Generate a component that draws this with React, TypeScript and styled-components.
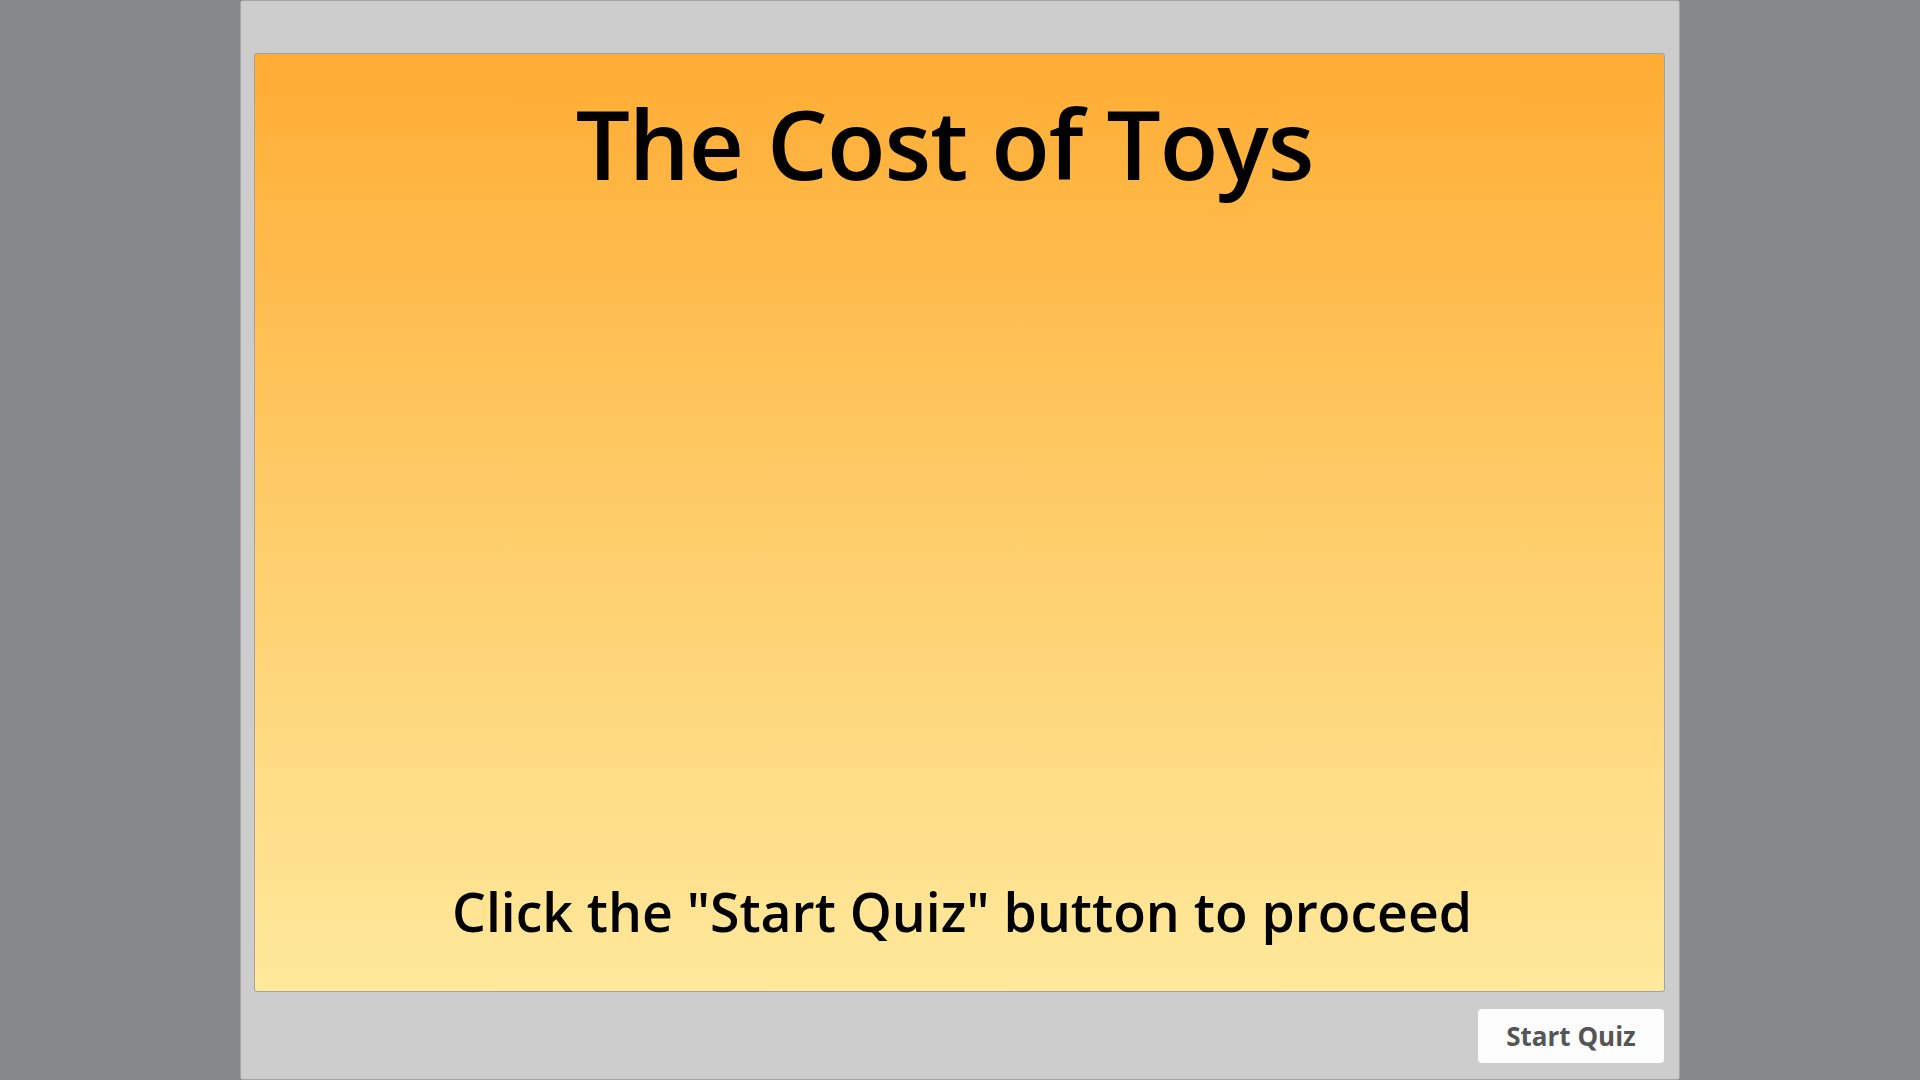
import styled, { createGlobalStyle } from "styled-components";
import { FC } from "react";

const GlobalStyle = createGlobalStyle`
    html, body {
        margin: 0;
        padding: 0;
        background: #85898c;
        font-family: "Open Sans", "Noto Sans", sans-serif;
    }
    * {
        box-sizing: border-box;
    }
`;

const App: FC = () => {
    return <>
        <GlobalStyle />
        <Stage>
            <Player>
                <Slide>
                    <Title>The Cost of Toys</Title>
                    <Hint>Click the "Start Quiz" button to proceed</Hint>
                </Slide>
                <Controls>
                    <StartButton type="button">Start Quiz</StartButton>
                </Controls>
            </Player>
        </Stage>
    </>
}

const Stage = styled.div`
    display: flex;
    justify-content: center;
    width: 100%;
    height: 1080px;
    overflow: hidden;
`;

const Player = styled.div`
    display: flex;
    flex-direction: column;
    width: 1440px;
    height: 1080px;
    padding: 52px 14px 0 13px;
    background: #cdcdcd;
    border: 1px solid #a5a5a5;
    border-radius: 3px;
`;

const Slide = styled.div`
    display: flex;
    flex-direction: column;
    justify-content: space-between;
    align-items: center;
    height: 939px;
    padding: 24px 20px 42px;
    background: linear-gradient(180deg, #ffac33 0%, #fecd6a 50%, #ffe99c 100%);
    border: 1px solid #a3a3a3;
    border-radius: 3px;
`;

const Title = styled.h1`
    margin: 0 30px 0 0;
    font-size: 96px;
    font-weight: 600;
    letter-spacing: -1px;
    line-height: 1.362;
    color: #000;
`;

const Hint = styled.p`
    margin: 0 0 0 5px;
    font-size: 53.5px;
    font-weight: 600;
    line-height: 1.362;
    color: #000;
`;

const Controls = styled.div`
    display: flex;
    justify-content: flex-end;
    margin-top: 17px;
`;

const StartButton = styled.button`
    width: 186px;
    height: 54px;
    padding: 0;
    margin-right: 1px;
    background: #fdfdfd;
    border: none;
    border-radius: 4px;
    font-family: "Open Sans", "Noto Sans", sans-serif;
    font-size: 26px;
    font-weight: 700;
    color: #555555;
    cursor: pointer;
`;

export default App;
